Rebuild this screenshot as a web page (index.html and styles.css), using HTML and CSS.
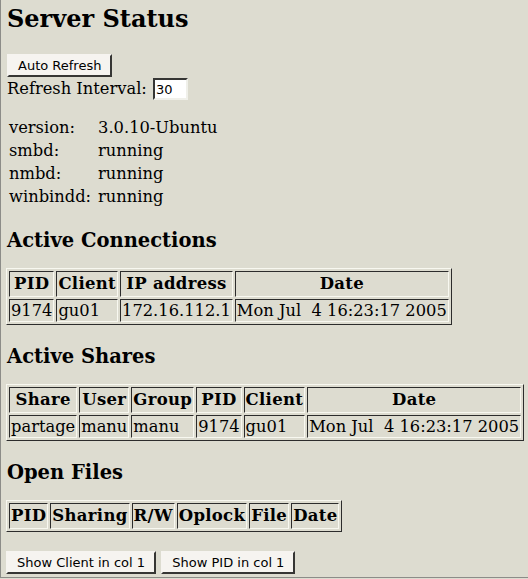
FILE: index.html
```html
<!DOCTYPE html>
<html lang="en">
<head>
  <meta charset="UTF-8">
  <title>Server Status</title>
  <link rel="stylesheet" href="styles.css">
</head>
<body>
<div class="frame">

  <h1>Server Status</h1>

  <form class="refresh">
    <input type="button" class="btn" value="Auto Refresh"><br>
    Refresh Interval: <input type="text" class="interval" value="30">
  </form>

  <table class="info">
    <tr><td class="label">version:</td><td>3.0.10-Ubuntu</td></tr>
    <tr><td class="label">smbd:</td><td>running</td></tr>
    <tr><td class="label">nmbd:</td><td>running</td></tr>
    <tr><td class="label">winbindd:</td><td>running</td></tr>
  </table>

  <h3>Active Connections</h3>
  <table class="status">
    <tr><th>PID</th><th>Client</th><th>IP address</th><th>Date</th></tr>
    <tr><td>9174</td><td>gu01</td><td>172.16.112.1</td><td>Mon Jul &nbsp;4 16:23:17 2005</td></tr>
  </table>

  <h3>Active Shares</h3>
  <table class="status">
    <tr><th>Share</th><th>User</th><th>Group</th><th>PID</th><th>Client</th><th>Date</th></tr>
    <tr><td>partage</td><td>manu</td><td>manu</td><td>9174</td><td>gu01</td><td>Mon Jul &nbsp;4 16:23:17 2005</td></tr>
  </table>

  <h3>Open Files</h3>
  <table class="status">
    <tr><th>PID</th><th>Sharing</th><th>R/W</th><th>Oplock</th><th>File</th><th>Date</th></tr>
  </table>

  <div class="bottom">
    <input type="button" class="btn" value="Show Client in col 1">
    <input type="button" class="btn" value="Show PID in col 1">
  </div>

</div>
</body>
</html>
```
FILE: styles.css
```css
/* swat status page */
html, body {
  margin: 0;
  padding: 0;
  background-color: #dddcd0;
}

body {
  font-family: "DejaVu Serif", serif;
  font-size: 16.3px;
  color: #000;
}

.frame {
  height: 578px;
  box-sizing: border-box;
  border-left: 1px solid #8c8c88;
  border-bottom: 1px solid #8c8c88;
  padding: 0 0 0 6px;
  overflow: hidden;
}

h1 {
  font-size: 24px;
  margin: 4px 0 0 0;
  line-height: 30px;
}

h3 {
  font-size: 19.5px;
  margin: 21px 0 0 0;
  line-height: 22px;
}

.btn {
  font-family: "DejaVu Sans", sans-serif;
  font-size: 13px;
  line-height: 15px;
  color: #000;
  background-color: #f6f4f0;
  border: 2px outset #f6f4f0;
  border-right-color: #8a8a86;
  border-bottom-color: #8a8a86;
  padding: 2px 9px;
  margin: 0;
}

.refresh {
  margin: 20px 0 0 0;
  line-height: 20px;
}

.interval {
  font-family: "DejaVu Sans", sans-serif;
  font-size: 13px;
  width: 29px;
  height: 18px;
  padding: 0 1px;
  margin: 1px 0 0 1px;
  border: 2px inset #8a8a86;
  border-right-color: #f0f0ea;
  border-bottom-color: #f0f0ea;
  background: #fff;
}

.info {
  margin: 15px 0 0 -1px;
  border-collapse: separate;
  border-spacing: 2px;
}

.info td {
  padding: 1px;
  line-height: 19px;
}

.info td.label {
  padding-right: 4px;
}

.status {
  margin: 16px 0 0 -1px;
  border: 1px outset #f8f8f0;
  border-right-color: #808080;
  border-bottom-color: #808080;
  border-spacing: 2px;
}

.status th,
.status td {
  border: 1px inset #808080;
  border-right-color: #f8f8f0;
  border-bottom-color: #f8f8f0;
  padding: 1px;
  line-height: 19px;
  white-space: nowrap;
}

.status th {
  font-size: 16.5px;
  letter-spacing: 0.3px;
  padding: 2px 1px;
  line-height: 20px;
}

.bottom {
  margin: 19px 0 0 -1px;
}
```
